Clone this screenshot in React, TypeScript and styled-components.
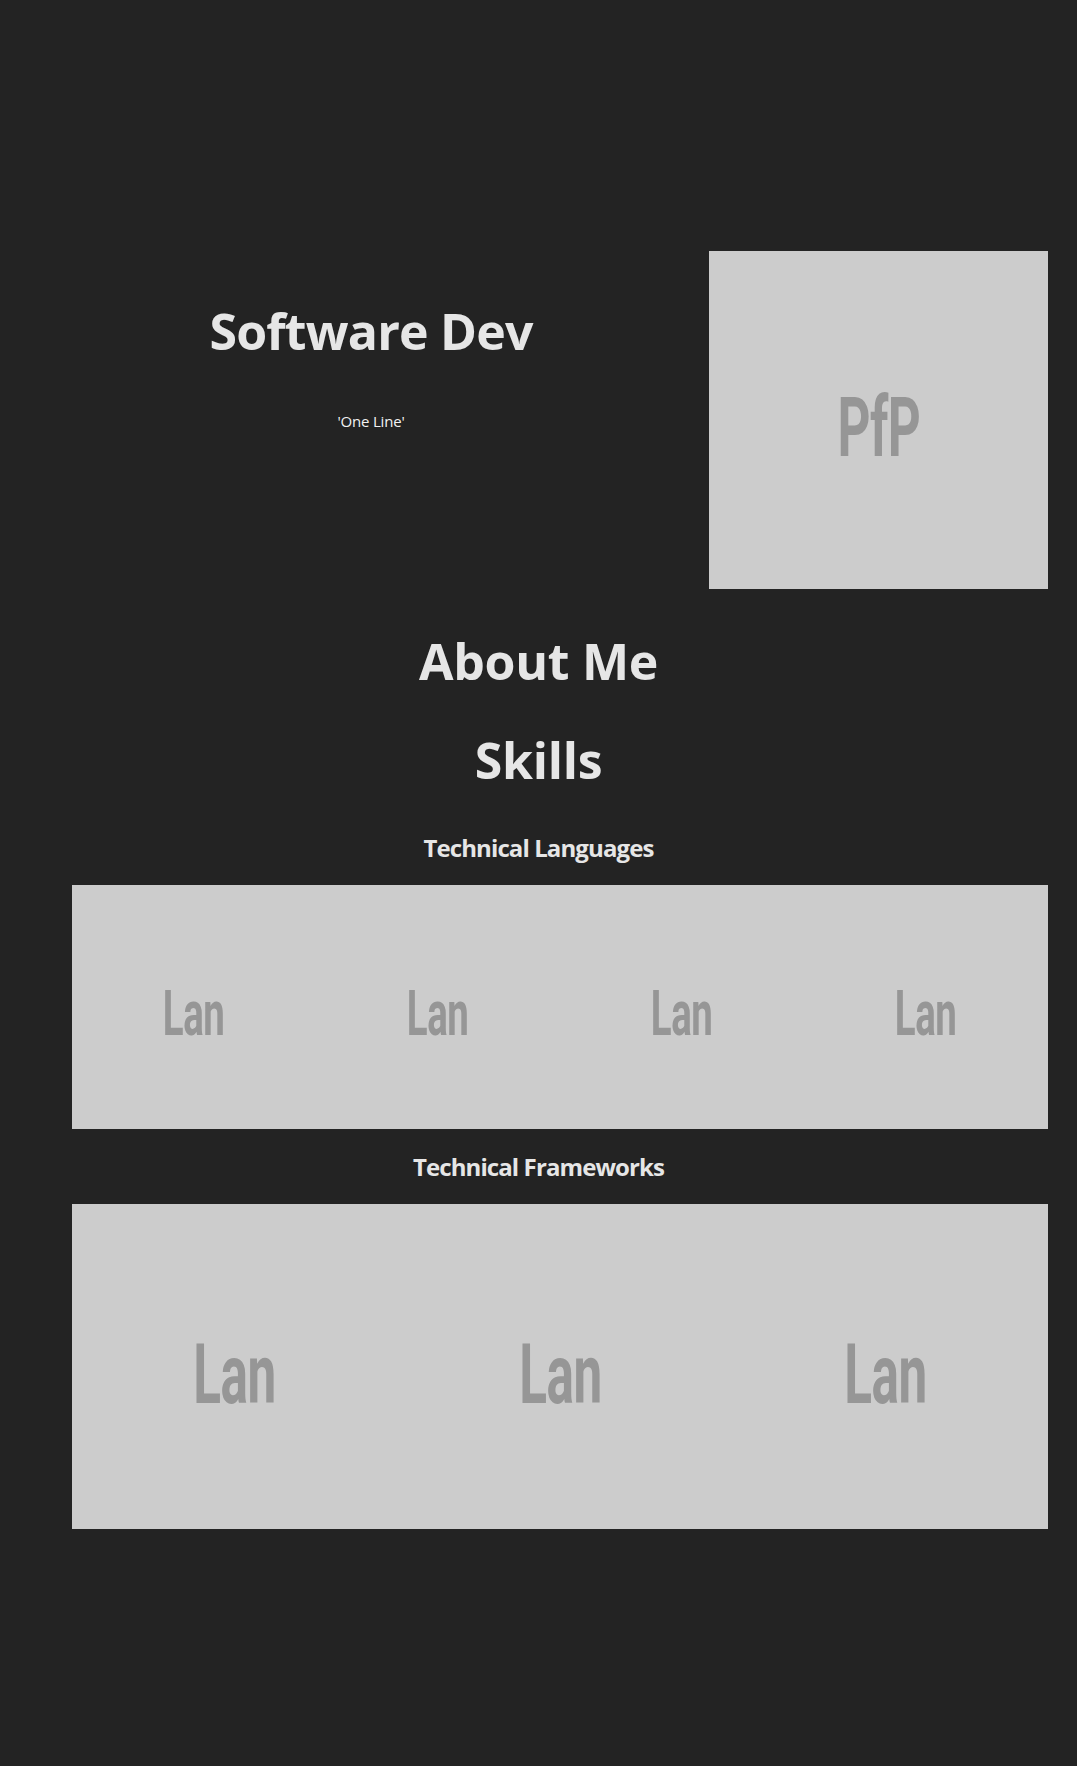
import React from "react";
import styled, { createGlobalStyle } from "styled-components";

const GlobalStyle = createGlobalStyle`
  html, body {
    margin: 0;
    padding: 0;
    background: #232323;
  }
  body {
    font-family: "Open Sans", "Noto Sans", Arial, sans-serif;
    color: #e6e6e6;
  }
`;

const Page = styled.main`
  min-height: 1766px;
  background: #232323;
  padding-top: 251px;
  box-sizing: border-box;
`;

const Hero = styled.section`
  display: grid;
  grid-template-columns: 1fr 339px;
  column-gap: 39px;
  align-items: start;
  margin: 0 29px 0 72px;
`;

const Intro = styled.div`
  text-align: center;
  padding-top: 50px;
`;

const Title = styled.h1`
  margin: 0;
  font-size: 50px;
  line-height: 60px;
  font-weight: 700;
  letter-spacing: -0.8px;
  color: #e6e6e6;
`;

const Tagline = styled.p`
  margin: 50px 0 0;
  font-size: 15px;
  line-height: 20px;
  letter-spacing: -0.2px;
  color: #f2f2f2;
`;

const SectionTitle = styled.h2<{ $gap: number }>`
  margin: ${(p) => p.$gap}px 0 0;
  text-align: center;
  font-size: 50px;
  line-height: 60px;
  font-weight: 700;
  letter-spacing: -0.3px;
  color: #e6e6e6;
`;

const GroupTitle = styled.h3<{ $gap: number }>`
  margin: ${(p) => p.$gap}px 0 22px;
  text-align: center;
  font-size: 24px;
  line-height: 30px;
  font-weight: 700;
  letter-spacing: -0.9px;
  color: #e6e6e6;
`;

const Gallery = styled.div`
  display: flex;
  margin: 0 29px 0 72px;
`;

// stands in for the placehold.co images in the original page
const Placeholder = styled.div<{ $size: number; $text: number }>`
  flex: 0 0 ${(p) => p.$size}px;
  width: ${(p) => p.$size}px;
  height: ${(p) => p.$size}px;
  background: #cccccc;
  display: flex;
  align-items: center;
  justify-content: center;
  overflow: hidden;

  span {
    display: inline-block;
    font-family: Roboto, "Liberation Sans", sans-serif;
    font-weight: 700;
    font-size: ${(p) => p.$text}px;
    line-height: 1;
    color: #969696;
    transform: translateY(9%) scaleX(0.61);
    letter-spacing: -0.01em;
  }
`;

const ProfilePic = styled(Placeholder)`
  height: 338px;
`;

const languages = ["Lan", "Lan", "Lan", "Lan"];
const frameworks = ["Lan", "Lan", "Lan"];

export default function App() {
  return (
    <>
      <GlobalStyle />
      <Page>
        <Hero>
          <Intro>
            <Title>Software Dev</Title>
            <Tagline>'One Line'</Tagline>
          </Intro>
          <ProfilePic $size={339} $text={84}>
            <span>PfP</span>
          </ProfilePic>
        </Hero>

        <SectionTitle $gap={42}>About Me</SectionTitle>
        <SectionTitle $gap={39}>Skills</SectionTitle>

        <GroupTitle $gap={43}>Technical Languages</GroupTitle>
        <Gallery>
          {languages.map((name, i) => (
            <Placeholder key={i} $size={244} $text={63}>
              <span>{name}</span>
            </Placeholder>
          ))}
        </Gallery>

        <GroupTitle $gap={23}>Technical Frameworks</GroupTitle>
        <Gallery>
          {frameworks.map((name, i) => (
            <Placeholder key={i} $size={325.33} $text={84}>
              <span>{name}</span>
            </Placeholder>
          ))}
        </Gallery>
      </Page>
    </>
  );
}
